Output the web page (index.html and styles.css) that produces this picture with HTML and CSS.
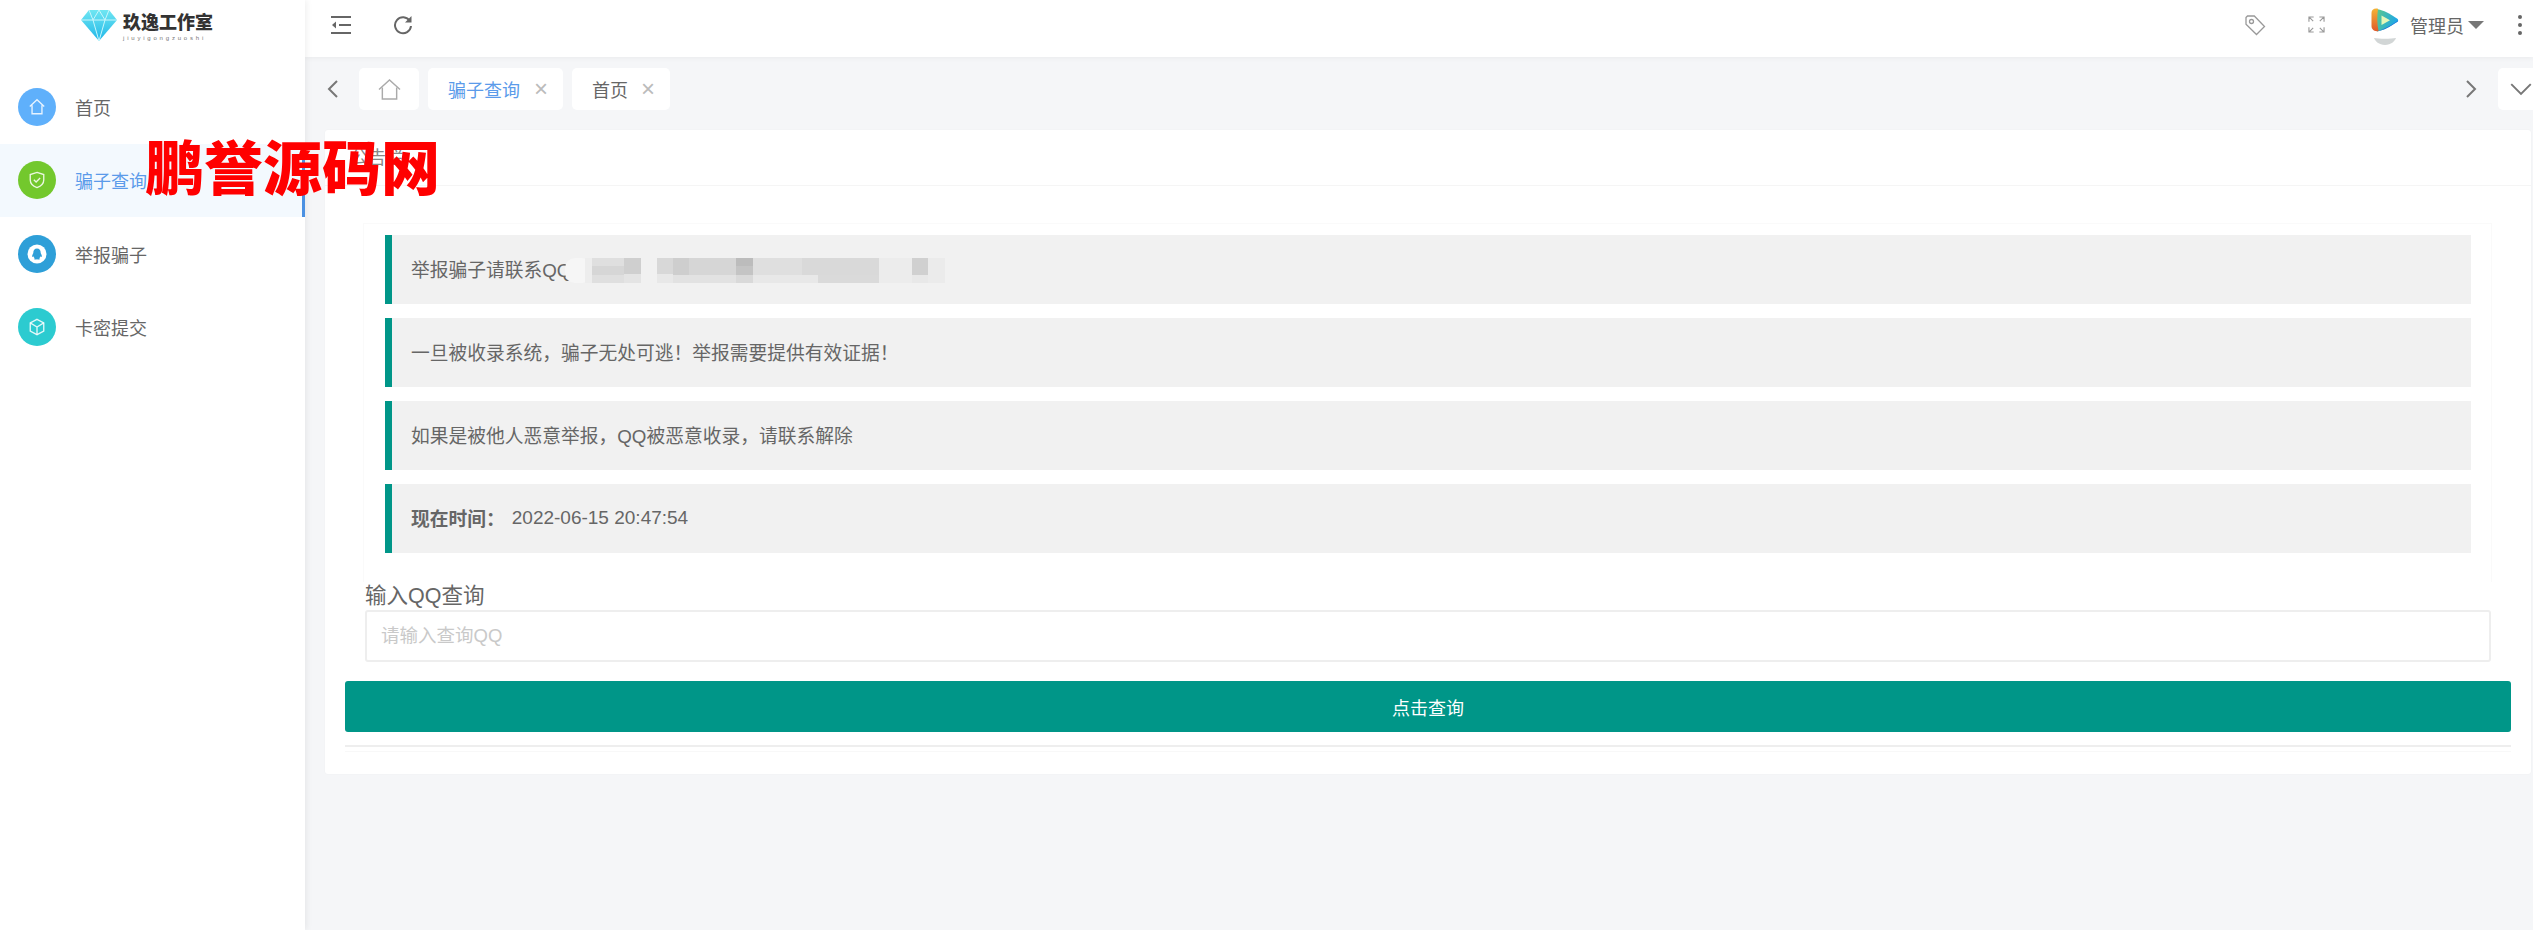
FILE: index.html
```html
<!DOCTYPE html>
<html lang="zh-CN">
<head>
<meta charset="utf-8">
<title>玖逸工作室</title>
<link rel="stylesheet" href="styles.css">
</head>
<body>
<aside class="sidebar">
  <div class="brand">
    <svg class="brand-gem" viewBox="0 0 36 32">
      <defs>
        <linearGradient id="gem" x1="0" y1="0" x2="0" y2="1">
          <stop offset="0" stop-color="#6fe6f2"/>
          <stop offset="1" stop-color="#1fb6e8"/>
        </linearGradient>
      </defs>
      <path d="M8 1h20l8 10-18 21L0 11z" fill="url(#gem)"/>
      <path d="M0 11h36M8 1l4 10 6 21 6-21 4-10M12 11l6-10 6 10" fill="none" stroke="#c8f6fb" stroke-width="1"/>
    </svg>
    <div class="brand-text">
      <span class="brand-name">玖逸工作室</span>
      <span class="brand-sub">jiuyigongzuoshi</span>
    </div>
  </div>
  <nav class="nav">
    <a class="nav-item">
      <span class="nav-dot dot-blue">
        <svg viewBox="0 0 20 20" class="nav-glyph"><path d="M2 9.500 10 2l8 7.500M4.500 8v9.500h11V8"/></svg>
      </span>
      <span>首页</span>
    </a>
    <a class="nav-item is-active">
      <span class="nav-dot dot-green">
        <svg viewBox="0 0 20 20" class="nav-glyph"><path d="M10 1.500 17.500 4v6c0 4.500-3.500 7-7.500 8.500C6 17 2.500 14.500 2.500 10V4z"/><path d="m6.500 9.800 2.500 2.500 4.500-4.500"/></svg>
      </span>
      <span>骗子查询</span>
    </a>
    <a class="nav-item">
      <span class="nav-dot dot-sky">
        <svg viewBox="0 0 20 20" class="nav-penguin"><circle cx="10" cy="10" r="9.500" fill="#fff"/><path d="M10 4.500c2.400 0 3.700 2 3.700 4.200 0 .6.300 1 .8 2 .6 1.300.4 2.300-.2 2.300-.3 0-.6-.3-.8-.7-.2 1-.7 1.600-1.300 2 .5.300.8.600.5 1-.5.500-2.200.3-2.700 0-.5.300-2.200.500-2.700 0-.3-.4 0-.7.500-1-.6-.4-1.100-1-1.300-2-.2.400-.5.700-.8.700-.6 0-.8-1-.2-2.300.5-1 .8-1.400.8-2 0-2.200 1.300-4.200 3.700-4.200z" fill="#2e9fd8"/></svg>
      </span>
      <span>举报骗子</span>
    </a>
    <a class="nav-item">
      <span class="nav-dot dot-teal">
        <svg viewBox="0 0 20 20" class="nav-glyph"><path d="M10 1.500 17.500 5.500v9L10 18.500l-7.500-4v-9z"/><path d="M2.500 5.500 10 10l7.500-4.500M10 10v8.500"/></svg>
      </span>
      <span>卡密提交</span>
    </a>
  </nav>
</aside>

<div class="main">
  <header class="topbar">
    <div class="topbar-group">
      <svg class="tool tool-menu" viewBox="0 0 20 20"><path d="M0 2h20M8 10h12M0 18h20"/><path d="M5 6.500 1 10l4 3.500z" class="solid"/></svg>
      <svg class="tool tool-refresh" viewBox="0 0 20 20"><path d="M16.800 6A8 8 0 1 0 18 11"/><path d="M18.500 1v6.500H12z" class="solid"/></svg>
    </div>
    <div class="topbar-group topbar-right">
      <svg class="tool tool-tag" viewBox="0 0 22 22"><path d="M2 3.500 3.500 2h6.800L20.500 12.500 12.500 20.500 2 10.300z"/><circle cx="7.500" cy="7.500" r="2"/></svg>
      <svg class="tool tool-full" viewBox="0 0 18 18"><path d="M1 6V1h5M1 1l4.500 4.500M17 6V1h-5M17 1l-4.500 4.500M1 12v5h5M1 17l4.500-4.500M17 12v5h-5M17 17l-4.500-4.500"/></svg>
      <div class="user">
        <svg class="avatar" viewBox="0 0 30 40">
          <defs>
            <linearGradient id="av-top" x1="0" y1="0" x2="1" y2="0.400">
              <stop offset="0" stop-color="#5cc98a"/>
              <stop offset="1" stop-color="#1ea7e8"/>
            </linearGradient>
            <linearGradient id="av-side" x1="0" y1="0" x2="0" y2="1">
              <stop offset="0" stop-color="#f5b335"/>
              <stop offset="1" stop-color="#e05a2a"/>
            </linearGradient>
          </defs>
          <path d="M7 2C7 2 12 3 16 5c4 2 8 4.500 11 6.500 1.500 1 1.500 2.500 0 3.500-3 2-7 4.500-11 6.500-4 2-9 3-9 3z" fill="url(#av-top)"/>
          <path d="M16 21.500c4-2 8-4.500 11-6.500 .8-.5 1.200-1.200 1.100-1.800-3.600 3-10 7-21.100 11.300 0 0 5-.900 9-3z" fill="#1f6fd6"/>
          <path d="M8 1.800C4 1 1.500 3 1.500 6v13c0 3 2.500 6 7 5-1.500-7-1.500-15 -.5-22.200z" fill="url(#av-side)"/>
          <path d="M11.500 8.500v9.500l8.500-4.800z" fill="#e6f7b8"/>
          <path d="M4 31c5 1 17 1 22 0-1 3-5 7-11 7S5 34 4 31z" fill="#d2d6d6"/>
        </svg>
        <span class="user-name">管理员</span>
        <span class="caret"></span>
      </div>
      <svg class="tool-more" viewBox="0 0 6 22"><circle cx="3" cy="3" r="2"/><circle cx="3" cy="11" r="2"/><circle cx="3" cy="19" r="2"/></svg>
    </div>
  </header>

  <div class="tabbar">
    <svg class="chev chev-left" viewBox="0 0 12 20"><path d="M10 2 2 10l8 8"/></svg>
    <div class="tab tab-home">
      <svg viewBox="0 0 24 22" class="tab-home-icon"><path d="M1 11 12 1l11 10"/><path d="M4.500 9v12h15V9"/></svg>
    </div>
    <div class="tab tab-current">骗子查询<span class="tab-close">×</span></div>
    <div class="tab">首页<span class="tab-close">×</span></div>
    <div class="tabbar-end">
      <svg class="chev chev-right" viewBox="0 0 12 20"><path d="m2 2 8 8-8 8"/></svg>
      <div class="tab-drop">
        <svg viewBox="0 0 20 12"><path d="m1 1 9 9 9-9"/></svg>
      </div>
    </div>
  </div>

  <section class="card">
    <h2 class="card-title">公告栏</h2>
    <div class="card-body">
      <div class="notices">
        <p class="notice">举报骗子请联系QQ
          <!-- pixelated cover over the contact details -->
          <svg class="mosaic" viewBox="0 0 380 25" width="380" height="25">
            <rect x="0" width="27" height="25" rx="10" fill="#f6f6f6"/>
            <rect x="20" width="7" height="25" fill="#ededed"/>
            <rect x="27" width="32" height="25" fill="#dfdfdf"/>
            <rect x="27" y="8" width="32" height="9" fill="#d6d6d6"/>
            <rect x="59" width="17" height="25" fill="#e4e4e4"/>
            <rect x="59" width="17" height="16" fill="#cfcfcf"/>
            <rect x="92" width="288" height="25" fill="#e8e8e8"/>
            <rect x="92" width="16" height="16" fill="#d8d8d8"/>
            <rect x="108" width="16" height="17" fill="#cecece"/>
            <rect x="124" width="47" height="17" fill="#d6d6d6"/>
            <rect x="108" y="17" width="63" height="8" fill="#e2e2e2"/>
            <rect x="171" width="17" height="8" fill="#bcbcbc"/>
            <rect x="171" y="8" width="17" height="9" fill="#c4c4c4"/>
            <rect x="171" y="17" width="17" height="8" fill="#d9d9d9"/>
            <rect x="188" width="49" height="17" fill="#dfdfdf"/>
            <rect x="237" width="77" height="17" fill="#d9d9d9"/>
            <rect x="253" y="17" width="61" height="8" fill="#dadada"/>
            <rect x="314" width="33" height="25" fill="#ececec"/>
            <rect x="347" width="16" height="17" fill="#d0d0d0"/>
            <rect x="363" width="17" height="25" fill="#ebebeb"/>
          </svg>
        </p>
        <p class="notice">一旦被收录系统，骗子无处可逃！举报需要提供有效证据！</p>
        <p class="notice">如果是被他人恶意举报，QQ被恶意收录，请联系解除</p>
        <p class="notice"><strong class="notice-key">现在时间：</strong><span class="notice-time">2022-06-15 20:47:54</span></p>
      </div>
      <form class="query">
        <label class="query-label" for="qq">输入QQ查询</label>
        <input class="query-input" id="qq" type="text" placeholder="请输入查询QQ">
      </form>
      <button class="query-btn" type="button">点击查询</button>
      <div class="rule"></div>
    </div>
  </section>
</div>

<div class="site-mark">鹏誉源码网</div>
</body>
</html>
```
FILE: styles.css
```css
* { box-sizing: border-box; }

html, body {
  height: 100%;
  margin: 0;
}

body {
  display: flex;
  overflow: hidden;
  position: relative;
  background: #f5f6f8;
  color: #666;
  font-family: "Liberation Sans", "Noto Sans CJK SC", sans-serif;
}

/* Sidebar */
.sidebar {
  width: 305px;
  flex: none;
  background: #fff;
  box-shadow: 2px 0 6px rgba(0, 0, 0, .06);
  z-index: 2;
}

.brand {
  height: 70px;
  display: flex;
  align-items: flex-start;
  padding: 9px 0 0 81px;
  gap: 6px;
}

.brand-gem { width: 36px; height: 32px; }

.brand-text {
  display: flex;
  flex-direction: column;
  width: 90px;
}

.brand-name {
  font-family: "Noto Sans CJK SC", sans-serif;
  font-size: 18px;
  line-height: 24px;
  font-weight: 900;
  color: #333;
  white-space: nowrap;
}

.brand-sub {
  font-size: 6px;
  line-height: 10px;
  letter-spacing: 2.800px;
  color: #777;
  white-space: nowrap;
}

.nav-item {
  height: 73.500px;
  display: flex;
  align-items: center;
  gap: 19px;
  padding-left: 18px;
  font-size: 18px;
  color: #666;
}

.nav-item.is-active {
  background: #f3f9fe;
  color: #5b9bea;
  position: relative;
}

.nav-item.is-active::after {
  content: "";
  position: absolute;
  right: 0;
  top: 0;
  bottom: 0;
  width: 3px;
  background: #4a90e2;
}

.nav-dot {
  width: 38px;
  height: 38px;
  border-radius: 50%;
  display: flex;
  align-items: center;
  justify-content: center;
  flex: none;
}

.dot-blue { background: #5fb0fb; }
.dot-green { background: #73c82d; }
.dot-sky { background: #2e9fd8; }
.dot-teal { background: #2ccbd0; }

.nav-glyph {
  width: 18px;
  height: 18px;
  fill: none;
  stroke: rgba(255, 255, 255, .85);
  stroke-width: 1.500;
}

.nav-penguin { width: 20px; height: 20px; }

/* Header strip */
.main {
  flex: 1;
  min-width: 0;
  display: flex;
  flex-direction: column;
  align-items: stretch;
}

.topbar {
  height: 57px;
  flex: none;
  background: #fff;
  box-shadow: 0 1px 5px rgba(0, 0, 0, .05);
  display: flex;
  justify-content: space-between;
  align-items: center;
  padding: 0 10px 8px 26px;
}

.topbar-group {
  display: flex;
  align-items: center;
}

.tool {
  fill: none;
  stroke: #666;
  stroke-width: 2;
  flex: none;
}

.tool .solid { fill: #666; stroke: none; }

.tool-menu { width: 20px; height: 20px; }
.tool-refresh { width: 20px; height: 20px; margin-left: 42px; }
.tool-tag { width: 22px; height: 22px; stroke: #999; stroke-width: 1.300; margin-right: 1px; }
.tool-full { width: 17px; height: 17px; margin-left: 41px; stroke: #999; stroke-width: 1.200; }

.user {
  display: flex;
  align-items: center;
  margin-left: 45px;
}

.avatar { width: 30px; height: 40px; margin-top: 4px; }

.user-name {
  font-size: 18px;
  margin-left: 10px;
  color: #666;
}

.caret {
  width: 0;
  height: 0;
  border: 8px solid transparent;
  border-top: 8px solid #777;
  border-bottom: 0;
  margin-left: 4px;
}

.tool-more {
  width: 6px;
  height: 22px;
  margin-left: 33px;
  fill: #666;
}

/* Open-page tabs */
.tabbar {
  height: 73px;
  flex: none;
  display: flex;
  align-items: center;
  gap: 9px;
  padding: 0 0 9px 22px;
}

.chev {
  fill: none;
  stroke: #777;
  stroke-width: 2;
  width: 12px;
  height: 20px;
  flex: none;
}

.chev-left { margin-right: 11px; }

.tab {
  height: 42px;
  background: #fff;
  border-radius: 5px;
  display: flex;
  align-items: center;
  padding: 0 14px 0 20px;
  font-size: 18px;
  color: #666;
  white-space: nowrap;
}

.tab-home {
  width: 60px;
  padding: 0;
  justify-content: center;
}

.tab-home-icon {
  width: 23px;
  height: 21px;
  fill: none;
  stroke: #aaa;
  stroke-width: 1.500;
}

.tab-current { color: #5b9bea; }

.tab-close {
  color: #bbb;
  font-size: 24px;
  font-weight: 400;
  line-height: 1;
  margin-left: 13px;
  width: 15px;
}

.tab-current .tab-close { margin-left: 14px; }

.tabbar-end {
  margin-left: auto;
  display: flex;
  align-items: center;
  gap: 21px;
}

.tab-drop {
  width: 35px;
  height: 42px;
  background: #fff;
  border-radius: 5px 0 0 5px;
  display: flex;
  align-items: center;
  justify-content: flex-end;
  padding-right: 1px;
}

.tab-drop svg {
  width: 22px;
  height: 13px;
  fill: none;
  stroke: #777;
  stroke-width: 1.800;
}

/* Announcement card */
.card {
  background: #fff;
  margin: 0 2px 0 20px;
  border-radius: 3px;
  box-shadow: 0 0 2px rgba(0, 0, 0, .04);
}

.card-title {
  margin: 0;
  height: 56px;
  padding: 16px 0 0 25px;
  font-size: 18px;
  line-height: 24px;
  font-weight: 400;
  color: #888;
  border-bottom: 1px solid #f5f5f5;
}

.card-body {
  padding: 37px 20px 22px;
}

.notices {
  margin: 0 19px 0 18px;
  padding: 11px 20px 29px 21px;
  border: 1px solid #fafafa;
  border-bottom: 0;
  display: flex;
  flex-direction: column;
  gap: 14px;
}

.notice {
  margin: 0;
  height: 69px;
  display: flex;
  align-items: center;
  background: #f1f1f1;
  border-left: 7px solid #009688;
  padding: 0 0 2px 19px;
  font-size: 18.750px;
  color: #666;
  position: relative;
}

.mosaic {
  position: absolute;
  left: 173px;
  top: 23px;
}

.notice-key {
  font-weight: 700;
  margin-right: 7px;
}

.notice-time { font-size: 19px; }

.query {
  margin: 0 20px 0 20px;
  display: flex;
  flex-direction: column;
}

.query-label {
  height: 28px;
  font-size: 21.500px;
  line-height: 28px;
  color: #666;
}

.query-input {
  height: 52px;
  width: 100%;
  padding: 0 14px;
  border: 2px solid #eee;
  border-radius: 3px;
  font: inherit;
  font-size: 18.500px;
  outline: none;
  background: #fff;
}

.query-input::placeholder { color: #c9c9c9; opacity: 1; }

.query-btn {
  display: block;
  width: 100%;
  height: 51px;
  margin-top: 19px;
  border: 0;
  border-radius: 3px;
  background: #009688;
  color: #fff;
  font: inherit;
  font-size: 18px;
}

.rule {
  margin-top: 13px;
  height: 7px;
  border-top: 2px solid #eee;
  border-bottom: 1px solid #f8f8f8;
}

/* Site mark across the top-left */
.site-mark {
  position: absolute;
  left: 145px;
  top: 122px;
  z-index: 5;
  font-family: "Noto Sans CJK SC", sans-serif;
  font-size: 59px;
  line-height: 85px;
  font-weight: 900;
  color: #f00;
  white-space: nowrap;
}
```
